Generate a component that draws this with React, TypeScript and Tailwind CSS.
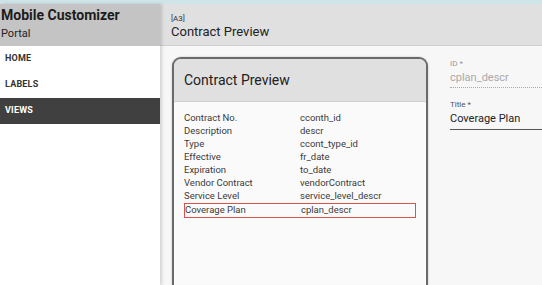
import React from "react";

const rows = [
  ["Contract No.", "cconth_id"],
  ["Description", "descr"],
  ["Type", "ccont_type_id"],
  ["Effective", "fr_date"],
  ["Expiration", "to_date"],
  ["Vendor Contract", "vendorContract"],
  ["Service Level", "service_level_descr"],
  ["Coverage Plan", "cplan_descr"],
];

const nav = ["HOME", "LABELS", "VIEWS"];

export default function App() {
  return (
    <div className="w-[542px] h-[285px] overflow-hidden flex flex-col bg-[#cfe4e7] font-['Roboto',sans-serif] text-[#222]">
      <div className="h-[4px] shrink-0" />
      <div className="flex flex-1 min-h-0">
        {/* sidebar */}
        <div className="w-[160px] shrink-0 flex flex-col bg-white shadow-[2px_0_3px_rgba(0,0,0,0.15)] z-10">
          <div className="h-[42px] bg-[#c4c4c4] px-[1px] pt-[2px]">
            <div className="text-[14px] font-bold leading-[18px] text-[#1c1c1c]">Mobile Customizer</div>
            <div className="text-[11px] leading-[14px] mt-[3px] text-[#222]">Portal</div>
          </div>
          {nav.map((n) => (
            <div
              key={n}
              className={`h-[26px] flex items-center px-[5px] text-[9px] font-bold tracking-[0.2px] ${
                n === "VIEWS" ? "bg-[#404040] text-white" : "text-[#333]"
              }`}
            >
              {n}
            </div>
          ))}
        </div>

        {/* main */}
        <div className="flex-1 flex flex-col bg-[#f7f7f7] min-w-0">
          <div className="h-[42px] shrink-0 bg-[#e0e0e0] border-b border-[#cfcfcf] px-[11px] pt-[10px]">
            <div className="text-[8px] leading-[9px] text-[#333]">[A3]</div>
            <div className="text-[13px] leading-[16px] mt-[1px] text-[#222]">Contract Preview</div>
          </div>
          <div className="flex flex-1 min-h-0 pt-[11px] pl-[12px]">
            {/* phone card */}
            <div className="w-[256px] shrink-0 border-[2px] border-b-0 border-[#6a6a6a] rounded-t-[9px] overflow-hidden bg-[#fafafa] shadow-[0_0_2px_rgba(0,0,0,0.25)]">
              <div className="h-[43px] bg-[#e0e0e0] border-b border-[#cfcfcf] flex items-center px-[10px]">
                <span className="text-[14px] text-[#222]">Contract Preview</span>
              </div>
              <div className="pt-[10px] px-[10px]">
                {rows.map(([k, v]) => (
                  <div
                    key={k}
                    className={`flex h-[13px] items-center text-[9.5px] text-[#3a3a3a] ${
                      k === "Coverage Plan" ? "border border-[#d9534f] h-[15px]" : ""
                    }`}
                  >
                    <span className="w-[116px]">{k}</span>
                    <span>{v}</span>
                  </div>
                ))}
              </div>
            </div>

            {/* form */}
            <div className="flex-1 pl-[22px] pt-[2px]">
              <div className="text-[8px] text-[#999] leading-[9px]">ID *</div>
              <div className="text-[11px] text-[#aaa] leading-[14px] mt-[3px] pb-[2px] border-b border-dotted border-[#aaa]">cplan_descr</div>
              <div className="text-[8px] text-[#555] leading-[9px] mt-[12px]">Title *</div>
              <div className="text-[11px] text-[#222] leading-[14px] mt-[3px] pb-[3px] border-b border-[#555]">Coverage Plan</div>
            </div>
          </div>
        </div>
      </div>
    </div>
  );
}
